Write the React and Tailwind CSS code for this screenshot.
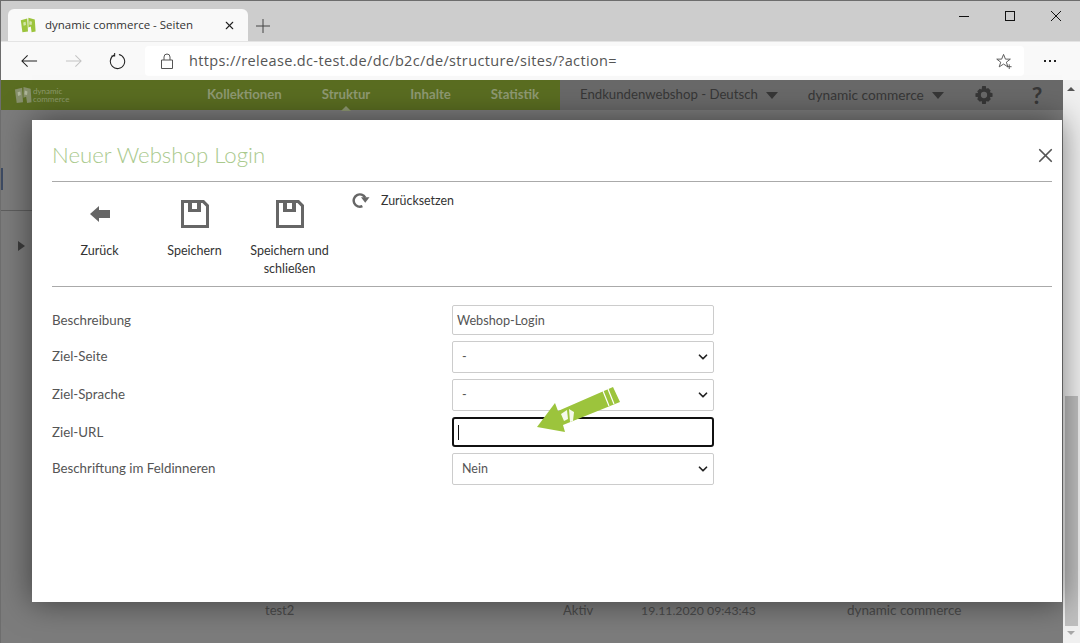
import { ChevronDown, X } from 'lucide-react';

const ui = { fontFamily: '"Open Sans", "Noto Sans", sans-serif' };
const page = { fontFamily: 'Lato, "Noto Sans", sans-serif' };

function Logo({ className, color = '#9cc43c' }) {
  return (
    <svg viewBox="0 0 20 20" className={className}>
      <path d="M1 4l8-2 1 16-7 1z" fill={color} />
      <path d="M10.500 1l8 2 1 15-5 1-1-7-3 1z" fill={color} />
      <path d="M4 7l3-1 .5 4-3 1zM12 5l3 1-.5 4-3-.5z" fill="#fff" opacity="0.55" />
    </svg>
  );
}

function SaveIcon() {
  return (
    <svg viewBox="0 0 28 28" className="w-[28px] h-[28px]">
      <path fillRule="evenodd" fill="#666" d="M0 0h23l5 5v23H0zM3 3v22h22V6.500L21.500 3H20v9H7V3zM11 3v6h5V3z" />
    </svg>
  );
}

function ToolButton({ icon, label, width }) {
  return (
    <div className={`flex flex-col items-center ${width}`}>
      <div className="h-[28px] flex items-center justify-center">{icon}</div>
      <div className="mt-[14px] text-[12.500px] leading-[18px] text-center text-[#333]">{label}</div>
    </div>
  );
}

function Field({ label, children, className, labelClass }) {
  return (
    <div className={`flex items-center ${className}`}>
      <div className={`w-[400px] text-[13.300px] text-[#555] ${labelClass}`}>{label}</div>
      {children}
    </div>
  );
}

function SelectBox({ value, className }) {
  return (
    <div className={`w-[262px] border border-[#ccc] rounded-[2px] flex items-center justify-between pl-[9px] pr-[3px] text-[12.500px] text-[#555] ${className}`}>
      <span>{value}</span>
      <ChevronDown size={14} strokeWidth={3} color="#222" />
    </div>
  );
}

export default function App() {
  return (
    <div className="relative w-[1080px] h-[643px] overflow-hidden flex flex-col bg-[#7c7c7c] border-t border-l border-[#6d6d6d]" style={ui}>
      {/* tab strip */}
      <div className="h-[40px] bg-[#cdcdcd] flex items-end pl-[7px] shrink-0">
        <div className="w-[240px] h-[32px] bg-[#f9f9f9] rounded-t-[6px] flex items-center pl-[12px] pr-[12px]">
          <Logo className="w-[16px] h-[16px]" />
          <span className="ml-[9px] text-[11.500px] text-[#333] flex-1">dynamic commerce - Seiten</span>
          <X size={13} strokeWidth={2} color="#222" />
        </div>
        <svg viewBox="0 0 14 14" className="w-[14px] h-[14px] ml-[8px] mb-[8px]">
          <path d="M7 0v14M0 7h14" stroke="#444" strokeWidth="1" />
        </svg>
        <div className="ml-auto flex items-center h-[30px] self-start mt-0">
          <div className="w-[46px] flex justify-center"><div className="w-[10px] border-t border-[#111]" /></div>
          <div className="w-[46px] flex justify-center"><div className="w-[10px] h-[10px] border border-[#111]" /></div>
          <svg viewBox="0 0 10 10" className="w-[10px] h-[10px] ml-[18px] mr-[19px]">
            <path d="M0 0l10 10M10 0L0 10" stroke="#111" strokeWidth="1" />
          </svg>
        </div>
      </div>

      {/* address row */}
      <div className="h-[39px] bg-[#f9f9f9] flex items-center shrink-0 border-t border-[#e4e4e4]">
        <svg viewBox="0 0 18 14" className="w-[17px] h-[14px] ml-[20px]">
          <path d="M17 7H1M7 1L1 7l6 6" fill="none" stroke="#222" strokeWidth="1.100" />
        </svg>
        <svg viewBox="0 0 18 14" className="w-[17px] h-[14px] ml-[27px]">
          <path d="M1 7h16M11 1l6 6-6 6" fill="none" stroke="#c4c4c4" strokeWidth="1.100" />
        </svg>
        <svg viewBox="0 0 18 18" className="w-[17px] h-[17px] ml-[27px]">
          <path d="M5.500 2.200a7.600 7.600 0 1 0 5-.7M6 0v3.200H2.600" fill="none" stroke="#222" strokeWidth="1.100" />
        </svg>
        <div className="w-[879px] h-[30px] bg-white rounded-[4px] ml-[19px] flex items-center pl-[16px] pr-[11px]">
          <svg viewBox="0 0 12 16" className="w-[12px] h-[16px]">
            <path d="M.5 7h11v8.500H.5zM3 7V4a3 3 0 0 1 6 0v3" fill="none" stroke="#555" strokeWidth="1" />
          </svg>
          <span className="ml-[16px] text-[14.500px] text-[#555] tracking-[0.35px] flex-1">https://release.dc-test.de/dc/b2c/de/structure/sites/?action=</span>
          <svg viewBox="0 0 18 18" className="w-[17px] h-[17px]">
            <path d="M8 1.500l2 5h5.200l-4.200 3.200 1.600 5-4.600-3-4.600 3 1.600-5L.8 6.500H6zM14 12v5M11.500 14.500h5" fill="none" stroke="#555" strokeWidth="1" />
          </svg>
        </div>
        <div className="ml-[20px] flex gap-[3px]">
          <div className="w-[2px] h-[2px] bg-[#222]" />
          <div className="w-[2px] h-[2px] bg-[#222]" />
          <div className="w-[2px] h-[2px] bg-[#222]" />
        </div>
      </div>

      {/* dimmed page behind the dialog */}
      <div className="flex-1 flex min-h-0" style={page}>
        <div className="flex-1 flex flex-col min-w-0">
          <div className="h-[30px] flex shrink-0">
            <div className="w-[559px] bg-[#5a6d21] flex items-center">
              <div className="flex items-center ml-[13px] w-[193px]">
                <Logo className="w-[18px] h-[18px] opacity-70" color="#9a9f8c" />
                <div className="ml-[1px] text-[8px] leading-[8px] text-[#8d9a6c]">dynamic<br />commerce</div>
              </div>
              <div className="flex gap-[40px] text-[13.200px] font-bold text-[#8f9a73]">
                <span>Kollektionen</span>
                <span className="relative">Struktur
                  <span className="absolute left-[19px] top-[21px] w-0 h-0 border-x-[5px] border-x-transparent border-b-[5px] border-b-[#8f9a73]" />
                </span>
                <span>Inhalte</span>
                <span>Statistik</span>
              </div>
            </div>
            <div className="flex-1 bg-[#696969] flex items-center text-[13.200px] text-[#373737]">
              <span className="ml-[20px]">Endkundenwebshop - Deutsch</span>
              <span className="ml-[8px] w-0 h-0 border-x-[6px] border-x-transparent border-t-[7px] border-t-[#373737]" />
              <span className="ml-[30px] text-[13.700px]">dynamic commerce</span>
              <span className="ml-[8px] w-0 h-0 border-x-[6px] border-x-transparent border-t-[7px] border-t-[#373737]" />
              <svg viewBox="0 0 20 20" className="w-[18px] h-[18px] ml-[31px]">
                <path fillRule="evenodd" fill="#373737" d="M8 0h4l.6 3 2-.9 2.800 2.800-1 2L19.500 8v4l-3 .6 1 2.200-2.800 2.800-2.100-1L12 20H8l-.6-3.400-2.100 1-2.800-2.800 1-2.200L.5 12V8l3-.1-1-2 2.800-2.800 2 .9zM10 6.500a3.500 3.500 0 1 0 0 7 3.500 3.500 0 0 0 0-7z" />
              </svg>
              <span className="ml-[39px] text-[23px] font-bold leading-none">?</span>
            </div>
          </div>
          {/* side tree peeking out left of the dialog */}
          <div className="flex-1 flex flex-col text-[13px] text-[#4a4a4a] min-h-0">
            <div className="mt-[58px] ml-0 w-[2px] h-[22px] bg-[#3d4a63]" />
            <div className="mt-[20px] h-px w-[32px] bg-[#5e5e5e]" />
            <span className="mt-[30px] ml-[17px] w-0 h-0 border-y-[5px] border-y-transparent border-l-[7px] border-l-[#3c3c3c]" />
            <div className="flex items-baseline mt-auto mb-[23px]">
              <span className="ml-[264px] w-[298px]">test2</span>
              <span className="w-[78px]">Aktiv</span>
              <span className="w-[206px] text-[12.300px]">19.11.2020 09:43:43</span>
              <span className="text-[13.500px]">dynamic commerce</span>
            </div>
          </div>
        </div>

        {/* scrollbar */}
        <div className="w-[17px] shrink-0 bg-[#f0f0f0] flex flex-col items-center pr-[1px]">
          <span className="mt-[7px] w-0 h-0 border-x-[4px] border-x-transparent border-b-[4px] border-b-[#555]" />
          <div className="mt-auto w-[13px] h-[230px] bg-[#bfbfbf]" />
          <span className="mt-[5px] mb-[8px] w-0 h-0 border-x-[4px] border-x-transparent border-t-[4px] border-t-[#a8a8a8]" />
        </div>
      </div>

      {/* dialog */}
      <div className="absolute left-[31px] top-[119px] w-[1030px] h-[482px] bg-white pl-[20px] pr-[10px] text-[#333] shadow-[0_0_30px_rgba(0,0,0,0.5)]" style={page}>
        <div className="h-[62px] flex items-center justify-between border-b border-[#aaa]">
          <span className="text-[22.200px] font-light text-[#a9c98c] mt-[9px]">Neuer Webshop Login</span>
          <X size={23} strokeWidth={1.800} color="#555" className="mt-[9px] -mr-[5px]" />
        </div>

        <div className="h-[105px] flex border-b border-[#aaa] pt-[18px]">
          <ToolButton
            width="w-[95px]"
            label="Zurück"
            icon={
              <svg viewBox="0 0 20 16" className="w-[20px] h-[16px]">
                <path fill="#666" d="M0 8l9-8v4h11v8H9v4z" />
              </svg>
            }
          />
          <ToolButton width="w-[95px]" label="Speichern" icon={<SaveIcon />} />
          <ToolButton width="w-[95px]" label={<>Speichern und<br />schließen</>} icon={<SaveIcon />} />
          <div className="flex items-start ml-[14px] -mt-[9px]">
            <svg viewBox="0 0 20 18" className="w-[19px] h-[17px]">
              <path d="M15 7a6.500 6.500 0 1 0-3 9" fill="none" stroke="#666" strokeWidth="2.600" />
              <path fill="#666" d="M10.500 6.500h9l-4.500 6z" />
            </svg>
            <span className="ml-[11px] text-[12.400px] text-[#333] mt-[1px]">Zurücksetzen</span>
          </div>
        </div>

        <div className="pt-[18px] flex flex-col">
          <Field label="Beschreibung" labelClass="mt-[2px]">
            <div className="w-[262px] h-[30px] border border-[#ccc] rounded-[2px] flex items-center pl-[4px] pt-px text-[12.700px] text-[#555]">Webshop-Login</div>
          </Field>
          <Field label="Ziel-Seite" className="mt-[6px]"><SelectBox value="-" className="h-[32px]" /></Field>
          <Field label="Ziel-Sprache" className="mt-[6px]"><SelectBox value="-" className="h-[32px]" /></Field>
          <Field label="Ziel-URL" labelClass="mt-[2px]" className="mt-[6px]">
            <div className="w-[262px] h-[30px] border-2 border-[#111] rounded-[3px] flex items-center pl-[4px]">
              <div className="w-px h-[15px] bg-[#111]" />
            </div>
          </Field>
          <Field label="Beschriftung im Feldinneren" className="mt-[6px]"><SelectBox value="Nein" className="h-[32px]" /></Field>
        </div>

        {/* green arrow pointing at the field */}
        <svg viewBox="0 0 90 50" className="absolute left-[504px] top-[265px] w-[90px] h-[50px]">
          <path fill="#9cc43c" d="M1 42L19 18l3 8L77 2l7 15-57 23 2 7z" />
          <path d="M67 6l6 15M72 4l6 15" stroke="#fff" strokeWidth="1.200" />
          <path d="M25 29l6-4 1 9-4 2zM33 24l5 3-1 9-3 1z" fill="#fff" opacity="0.9" />
        </svg>
      </div>
    </div>
  );
}
